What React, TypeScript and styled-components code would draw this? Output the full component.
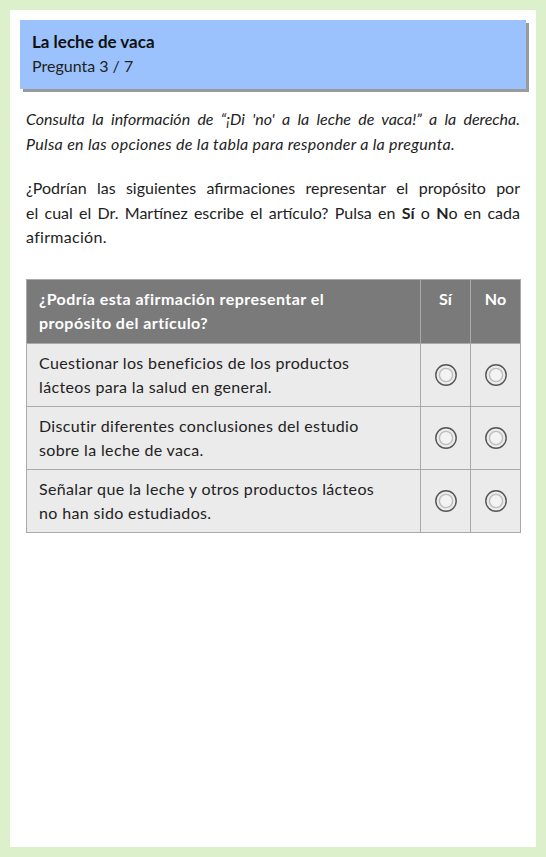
import React from "react";
import styled, { createGlobalStyle } from "styled-components";

const Global = createGlobalStyle`
  html, body { margin: 0; padding: 0; background: #dcf0cc; }
  body { padding: 10px; font-family: Lato, "Open Sans", sans-serif; color: #222; }
  * { box-sizing: border-box; }
`;

const Panel = styled.div`
  background: #fff;
  height: 837px;
  padding: 10px;
`;

const Header = styled.header`
  background: #9bc2fd;
  box-shadow: 3px 3px 0 #9a9a9a;
  padding: 10px 12px 11px;
  height: 69px;
  width: 506px;
`;

const Title = styled.h1`
  margin: 0;
  font-size: 17px;
  font-weight: 700;
  line-height: 24px;
  color: #111;
`;

const Subtitle = styled.div`
  font-size: 16px;
  line-height: 24px;
  color: #222;
`;

const Body = styled.div`
  padding: 18px 6px 0;
`;

const Para = styled.p<{ $italic?: boolean }>`
  margin: 0 0 20px;
  font-size: 16px;
  line-height: 24.5px;
  font-style: ${(p) => (p.$italic ? "italic" : "normal")};
`;

const Line = styled.span<{ $last?: boolean }>`
  display: block;
  text-align: ${(p) => (p.$last ? "left" : "justify")};
  text-align-last: ${(p) => (p.$last ? "left" : "justify")};
  letter-spacing: ${(p) => (p.$last ? "0.3px" : "0")};
`;

const Table = styled.table`
  margin-top: 29px;
  width: 495px;
  border-collapse: collapse;
  font-size: 16px;
  line-height: 24px;
`;

const Th = styled.th<{ $narrow?: boolean }>`
  background: #7a7a7a;
  color: #fff;
  font-weight: 700;
  text-align: ${(p) => (p.$narrow ? "center" : "left")};
  vertical-align: top;
  padding: 7px 12px 8px;
  border: 1px solid #a9a9a9;
  width: ${(p) => (p.$narrow ? "50px" : "auto")};
  letter-spacing: ${(p) => (p.$narrow ? "0" : "0.45px")};
`;

const Td = styled.td<{ $center?: boolean }>`
  background: #ebebeb;
  border: 1px solid #a9a9a9;
  padding: 7px 12px 7px;
  height: 62px;
  vertical-align: middle;
  text-align: ${(p) => (p.$center ? "center" : "left")};
  color: #222;
  letter-spacing: ${(p) => (p.$center ? "0" : "0.35px")};
`;

const RadioBtn = styled.button`
  border: 0;
  background: transparent;
  padding: 0;
  cursor: pointer;
  display: inline-flex;
  vertical-align: middle;
  margin-top: -3px;
`;

const Radio = () => (
  <RadioBtn aria-label="opción">
    <svg width="24" height="24" viewBox="0 0 24 24">
      <circle cx="12" cy="12" r="10.2" fill="#ececec" stroke="#555" strokeWidth="1.4" />
      <circle cx="12" cy="12" r="6.6" fill="#f3f3f3" stroke="#bdbdbd" strokeWidth="1.4" />
    </svg>
  </RadioBtn>
);

const rows = [
  ["Cuestionar los beneficios de los productos", "lácteos para la salud en general."],
  ["Discutir diferentes conclusiones del estudio", "sobre la leche de vaca."],
  ["Señalar que la leche y otros productos lácteos", "no han sido estudiados."],
];

export default function App() {
  return (
    <>
      <Global />
      <Panel>
        <Header>
          <Title>La leche de vaca</Title>
          <Subtitle>Pregunta 3 / 7</Subtitle>
        </Header>
        <Body>
          <Para $italic>
            <Line>Consulta la información de “¡Di 'no' a la leche de vaca!” a la derecha.</Line>
            <Line $last>Pulsa en las opciones de la tabla para responder a la pregunta.</Line>
          </Para>
          <Para>
            <Line>¿Podrían las siguientes afirmaciones representar el propósito por</Line>
            <Line>
              el cual el Dr. Martínez escribe el artículo? Pulsa en <b>Sí</b> o <b>N</b>o en cada
            </Line>
            <Line $last>afirmación.</Line>
          </Para>
          <Table>
            <thead>
              <tr>
                <Th>
                  ¿Podría esta afirmación representar el
                  <br />
                  propósito del artículo?
                </Th>
                <Th $narrow>Sí</Th>
                <Th $narrow>No</Th>
              </tr>
            </thead>
            <tbody>
              {rows.map((r, i) => (
                <tr key={i}>
                  <Td>
                    {r[0]}
                    <br />
                    {r[1]}
                  </Td>
                  <Td $center>
                    <Radio />
                  </Td>
                  <Td $center>
                    <Radio />
                  </Td>
                </tr>
              ))}
            </tbody>
          </Table>
        </Body>
      </Panel>
    </>
  );
}
